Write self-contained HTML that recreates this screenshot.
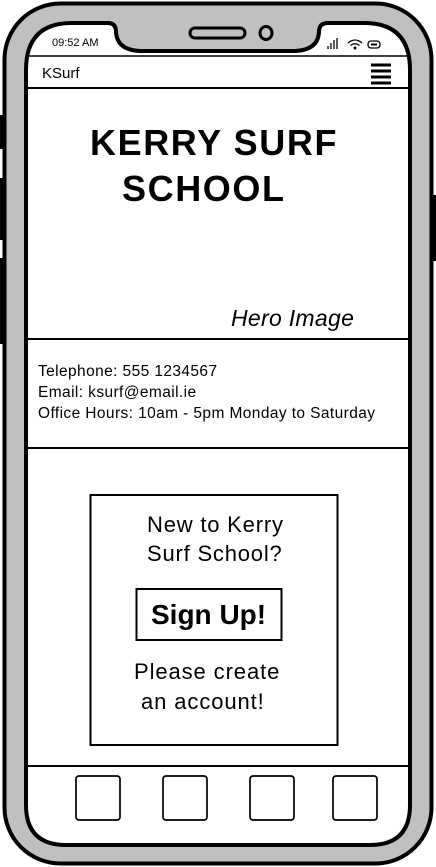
<!DOCTYPE html>
<html><head><meta charset="utf-8"><style>
*{margin:0;padding:0;box-sizing:border-box}
body{width:436px;height:867px;background:#fff;position:relative;overflow:hidden;font-family:"Liberation Sans",sans-serif;color:#000}
.a{position:absolute;white-space:nowrap}
</style></head><body>
<svg class="a" style="left:0;top:0" width="436" height="867" viewBox="0 0 436 867">
<rect x="0" y="115" width="5" height="34" fill="#000"/>
<rect x="0" y="178" width="5" height="62" fill="#000"/>
<rect x="0" y="258" width="5" height="86" fill="#000"/>
<rect x="431" y="195" width="5" height="66" fill="#000"/>
<rect x="4.5" y="3.5" width="427" height="860" rx="56" fill="#c0c0c0" stroke="#000" stroke-width="4"/>
<path d="M26 70 Q26 24 70 23 L108 23 Q116 23 116 32 Q117 50 140 51 L295 51 Q318 50 319 32 Q319 23 328 23 L366 23 Q410 24 410 70 L410 805 Q410 845 370 845 L66 845 Q26 845 26 805 Z" fill="#fff" stroke="#000" stroke-width="4"/>
<rect x="190" y="28" width="55" height="10" rx="5" fill="none" stroke="#000" stroke-width="3"/>
<ellipse cx="266" cy="33" rx="6" ry="6.5" fill="none" stroke="#000" stroke-width="3"/>
<line x1="27" y1="56" x2="409" y2="56" stroke="#000" stroke-width="1.5"/>
<line x1="27" y1="88" x2="409" y2="88" stroke="#000" stroke-width="2"/>
<line x1="27" y1="339" x2="409" y2="339" stroke="#000" stroke-width="2"/>
<line x1="27" y1="448" x2="409" y2="448" stroke="#000" stroke-width="2"/>
<line x1="27" y1="766" x2="409" y2="766" stroke="#000" stroke-width="2"/>
<g stroke="#000" stroke-width="3"><line x1="371" y1="65" x2="391" y2="65"/><line x1="371" y1="71" x2="391" y2="71"/><line x1="371" y1="77" x2="391" y2="77"/><line x1="371" y1="83" x2="391" y2="83"/></g>
<g stroke="#000" stroke-width="1.3" fill="none">
<line x1="328" y1="49" x2="328" y2="46"/><line x1="331" y1="49" x2="331" y2="43"/><line x1="334" y1="49" x2="334" y2="40"/><line x1="337" y1="49" x2="337" y2="38"/>
<path d="M348 43 Q355 37 362 43 M350.5 45.5 Q355 42 359.5 45.5"/><circle cx="355" cy="48" r="0.8" fill="#000"/>
<rect x="368" y="41" width="12" height="7" rx="3"/></g>
<rect x="371" y="43.5" width="6" height="2" fill="#000"/>
<rect x="90.5" y="495" width="247" height="250" fill="none" stroke="#000" stroke-width="2"/>
<rect x="136.5" y="589" width="145" height="51" fill="none" stroke="#000" stroke-width="2"/>
<g fill="none" stroke="#000" stroke-width="1.7">
<rect x="76" y="776" width="44" height="44" rx="3"/>
<rect x="163" y="776" width="44" height="44" rx="3"/>
<rect x="250" y="776" width="44" height="44" rx="3"/>
<rect x="333" y="776" width="44" height="44" rx="3"/></g>
</svg>
<div class="a" style="left:52px;top:37px;font-size:11px">09:52 AM</div>
<div class="a" style="left:42px;top:65px;font-size:15px">KSurf</div>
<div class="a" style="left:90px;top:118px;font-size:36px;font-weight:bold;letter-spacing:1.6px;line-height:50px">KERRY SURF</div>
<div class="a" style="left:122px;top:164px;font-size:36px;font-weight:bold;letter-spacing:1.6px;line-height:50px">SCHOOL</div>
<div class="a" style="left:231px;top:305px;font-size:23px;font-style:italic;letter-spacing:0.3px">Hero Image</div>
<div class="a" style="left:38px;top:361px;font-size:15.5px;line-height:21px;letter-spacing:0.4px">Telephone: 555 1234567<br>Email: ksurf@email.ie<br>Office Hours: 10am - 5pm Monday to Saturday</div>
<div class="a" style="left:147px;top:510px;font-size:22px;line-height:29px;letter-spacing:0.8px">New to Kerry<br>Surf School?</div>
<div class="a" style="left:151px;top:599px;font-size:28px;font-weight:bold">Sign Up!</div>
<div class="a" style="left:134px;top:657px;font-size:22px;line-height:30px;letter-spacing:0.9px">Please create<br>&nbsp;an account!</div>
</body></html>
